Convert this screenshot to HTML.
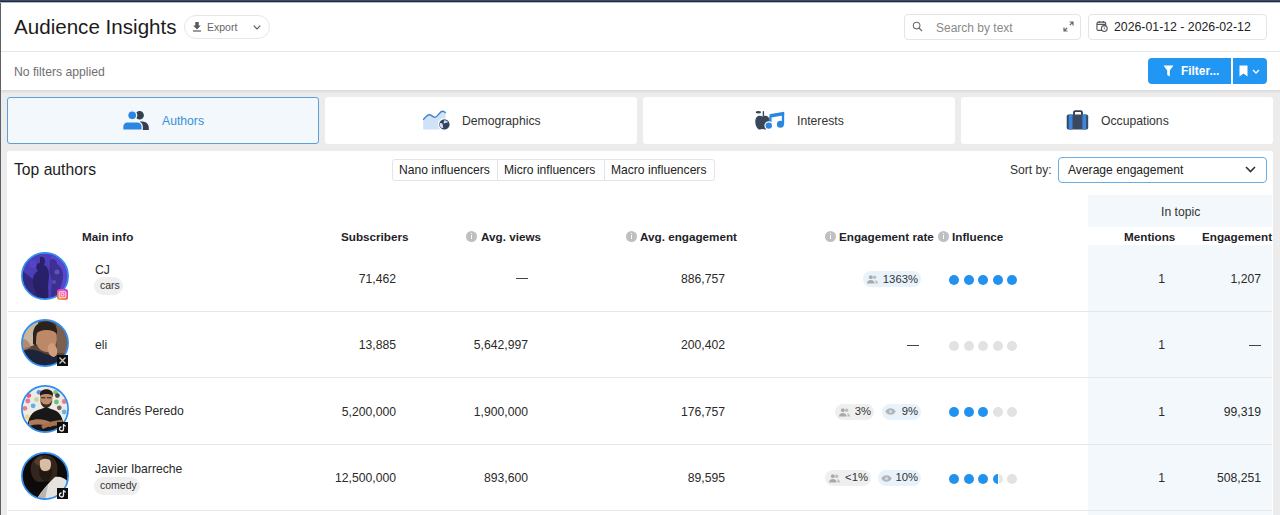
<!DOCTYPE html>
<html><head><meta charset="utf-8">
<style>
*{box-sizing:border-box;margin:0;padding:0}
html,body{-webkit-font-smoothing:antialiased;width:1280px;height:515px;overflow:hidden;background:#ececed;font-family:"Liberation Sans",sans-serif;color:#222}
.abs{position:absolute}
#topbar{left:0;top:0;width:1280px;height:3px;background:linear-gradient(#3b4a66 0,#3b4a66 1px,#1e2a41 1px,#1e2a41 2px,#b4bac4 2px)}
#leftbar{left:0;top:3px;width:1px;height:512px;background:#5c6068}
#header{left:1px;top:2px;width:1279px;height:88px;background:#fff}
#hline{left:1px;top:51px;width:1279px;height:1px;background:#e6e7ea}
.t{position:absolute;white-space:nowrap;line-height:1}
.btn-export{left:184px;top:15px;width:86px;height:24px;border:1px solid #e6e6e8;border-radius:12px;background:#fff}
.inp{border:1px solid #e3e4e7;border-radius:4px;background:#fff}
.tab{top:97px;height:47px;background:#fff;border-radius:3px}
.tab.active{background:#f3f8fd;border:1px solid #5c9fdd}
.card{left:7px;top:151px;width:1266px;height:380px;background:#fff;border-radius:3px}
.seg{left:392px;top:159px;width:323px;height:22px;border:1px solid #e3e4e7;border-radius:3px;background:#fff}
.seg div{position:absolute;top:0;height:20px;border-left:1px solid #e3e4e7}
.select{left:1058px;top:157px;width:209px;height:26px;border:1px solid #6aaee6;border-radius:4px;background:#fff}
.intopic{left:1088px;top:195px;width:184px;height:32px;background:#f3f8fc}
.intopic2{left:1088px;top:245px;width:184px;height:270px;background:#f3f8fc}
.hdr{font-weight:bold;font-size:11.7px;color:#1f2329}
.info{position:absolute;width:11px;height:11px;border-radius:50%;background:#bfbfc1}
.info:after{content:"";position:absolute;left:5px;top:4.5px;width:1.3px;height:4px;background:#fff}
.info:before{content:"";position:absolute;left:5px;top:2px;width:1.3px;height:1.3px;background:#fff}
.rowline{position:absolute;left:8px;width:1264px;height:1px;background:#e5e6e9}
.num{font-size:12.2px;color:#2a2a2a}
.name{font-size:12.2px;color:#2a2a2a}
.chip{position:absolute;height:18px;border-radius:9px;background:#efefef;font-size:10.5px;color:#333;line-height:16.5px;padding:0 6px}
.av{position:absolute;width:48px;height:48px;line-height:0}
.dot{position:absolute;width:10px;height:10px;border-radius:50%;background:#2193ef}
.dot.g{background:#e2e2e3}
.pct{position:absolute;height:16px;border-radius:8px;font-size:11.3px;color:#333;line-height:16px}
.pct.b{background:#e8f2fb}
.pct.gr{background:#efefef}
.pct .ic{position:absolute;top:3px;line-height:0}
.pct .pt{position:absolute;top:2px;line-height:1}
.dot.half{background:linear-gradient(90deg,#2193ef 48%,#fff 48%,#fff 56%,#e6e6e7 56%)}
.badge{position:absolute;width:11px;height:11px;line-height:0}
.badge.ig{border-radius:2.5px;background:linear-gradient(20deg,#f8c84a 0%,#f5703a 25%,#ec4aa0 60%,#c43ad8 100%)}
.badge.bx{background:#0e0e0e}
</style></head><body>
<div id="header" class="abs"></div>
<div id="topbar" class="abs"></div>
<div id="leftbar" class="abs"></div>
<div id="hline" class="abs"></div>
<div class="abs" style="left:1px;top:90px;width:1279px;height:4px;background:linear-gradient(#dadadc,#ececed)"></div>

<!-- Title -->
<div class="t" style="left:14px;top:17px;font-size:20.6px;color:#1c1c1c">Audience Insights</div>
<div class="abs btn-export"></div>
<svg class="abs" style="left:193px;top:21.5px" width="8" height="10" viewBox="0 0 8 10"><path d="M2.3 0h3.4v3.6h2.1L4 7.4 0.2 3.6h2.1z" fill="#5a5a5a"/><rect x="0" y="8.4" width="8" height="1.2" fill="#5a5a5a"/></svg>
<div class="t" style="left:207px;top:22px;font-size:10.5px;color:#666">Export</div>
<svg class="abs" style="left:252.5px;top:24.5px" width="8" height="5" viewBox="0 0 8 5"><path d="M0.7 0.7l3.3 3.3 3.3-3.3" stroke="#5a5a5a" stroke-width="1.1" fill="none"/></svg>

<!-- Search -->
<div class="abs inp" style="left:904px;top:14px;width:177px;height:26px"></div>
<svg class="abs" style="left:912px;top:21px" width="11" height="11" viewBox="0 0 11 11"><circle cx="4.6" cy="4.6" r="3.3" stroke="#707070" stroke-width="1.1" fill="none"/><path d="M7 7l3 3" stroke="#707070" stroke-width="1.3"/></svg>
<div class="t" style="left:936px;top:21.5px;font-size:12px;color:#8a8a8a">Search by text</div>
<svg class="abs" style="left:1063px;top:21px" width="11" height="11" viewBox="0 0 11 11"><path d="M6.5 1h3.5v3.5M10 1L6.8 4.2M4.5 10H1V6.5M1 10l3.2-3.2" stroke="#666" stroke-width="1.2" fill="none"/></svg>

<!-- Date -->
<div class="abs inp" style="left:1088px;top:14px;width:179px;height:26px"></div>
<svg class="abs" style="left:1096px;top:20px" width="12" height="13" viewBox="0 0 13 13.5"><rect x="1" y="2" width="9.5" height="9" rx="1.5" stroke="#555" stroke-width="1.2" fill="none"/><path d="M1 4.5h9.5M3.5 0.8v2M8 0.8v2" stroke="#555" stroke-width="1.2"/><circle cx="9" cy="9" r="3.2" fill="#fff" stroke="#555" stroke-width="1.1"/><path d="M9 7.5v1.6l1 .7" stroke="#555" stroke-width="0.9" fill="none"/></svg>
<div class="t" style="left:1114px;top:20.5px;font-size:12.3px;color:#222">2026-01-12 - 2026-02-12</div>

<!-- filters row -->
<div class="t" style="left:14px;top:65.5px;font-size:12.2px;color:#707070">No filters applied</div>
<div class="abs" style="left:1148px;top:58px;width:83px;height:26px;background:#2196f3;border-radius:4px 0 0 4px"></div>
<div class="abs" style="left:1233px;top:58px;width:34px;height:26px;background:#2196f3;border-radius:0 4px 4px 0"></div>
<svg class="abs" style="left:1163px;top:65px" width="11" height="12" viewBox="0 0 11 12"><path d="M0.5 0.5h10L6.8 5.5V11.5L4.2 10V5.5z" fill="#fff"/></svg>
<div class="t" style="left:1181px;top:65.5px;font-size:11.9px;font-weight:bold;color:#fff">Filter...</div>
<svg class="abs" style="left:1239px;top:65px" width="10" height="12" viewBox="0 0 10 12"><path d="M0.5 0.5h8v11L4.5 8.5 0.5 11.5z" fill="#fff"/></svg>
<svg class="abs" style="left:1252px;top:69px" width="8" height="5" viewBox="0 0 8 5"><path d="M1 1l3 3 3-3" stroke="#fff" stroke-width="1.3" fill="none"/></svg>

<!-- tabs -->
<div class="abs tab active" style="left:7px;width:312px"></div>
<div class="abs tab" style="left:325px;width:312px"></div>
<div class="abs tab" style="left:643px;width:312px"></div>
<div class="abs tab" style="left:961px;width:312px"></div>

<svg class="abs" style="left:120px;top:108px" width="32" height="26" viewBox="0 0 32 26"><path d="M19.6 3a4.3 4.3 0 1 1 0 8.6a4.3 4.3 0 1 1 0-8.6z" fill="#343f50"/><circle cx="12.2" cy="7.3" r="4.5" fill="#2a86e0" stroke="#f3f8fd" stroke-width="1.3"/><path d="M20 13.5h2.5c3.5 0 6.3 2.8 6.3 6.3v2.3H20z" fill="#343f50"/><path d="M7 13.9h10.5c2.6 0 4.7 2.2 4.7 4.8v3.4H2.7v-3.4c0-2.6 1.9-4.8 4.3-4.8z" fill="#2a86e0" stroke="#f3f8fd" stroke-width="1.3"/></svg>
<div class="t" style="left:162px;top:115px;font-size:12.2px;color:#3a8fd9">Authors</div>

<svg class="abs" style="left:420px;top:108px" width="32" height="26" viewBox="0 0 32 26"><path d="M3.2 11.7C5.5 9 7.5 6.8 9.3 6.8C11.5 6.8 13 9.4 15.1 9.4C17.5 9.4 19.8 3.3 22.4 3.3C23.8 3.3 25 4.2 25.6 5V21.6H3.2Z" fill="#cfe2f8"/><path d="M3.2 11.7C5.5 9 7.5 6.8 9.3 6.8C11.5 6.8 13 9.4 15.1 9.4C17.5 9.4 19.8 3.3 22.4 3.3C23.8 3.3 25 4.2 25.6 5" fill="none" stroke="#3f82d0" stroke-width="1.4"/><circle cx="24.4" cy="16.4" r="5.8" fill="#33435c" stroke="#fff" stroke-width="1.2"/><path d="M19.8 15.2c1.2-.4 2.6.2 3 1.4c.4 1.2-.2 2.4.6 3.5c-1.6.1-3.2-.9-3.6-2.4z" fill="#cfe2f8"/><path d="M24.6 12c1.2.9 3 .8 3.6 2.2c-1 .4-2.3.1-3 .9c-.6.6-1.4.2-1.6-.6z" fill="#cfe2f8"/></svg>
<div class="t" style="left:462px;top:115px;font-size:12.2px;color:#333">Demographics</div>

<svg class="abs" style="left:750px;top:104px" width="40" height="30" viewBox="0 0 40 30"><ellipse cx="8.4" cy="8.3" rx="2.7" ry="1.3" fill="#3a4659"/><path d="M13.4 7.2V12" stroke="#3a4659" stroke-width="1.4"/><path d="M9.5 11.8c-2.5 0-4.2 2.3-4.2 6c0 4.2 2.3 7.8 4.6 7.8c1 0 1.6-.5 2.6-.5s1.6.5 2.6.5c2.3 0 4.2-3.6 4.6-7.8c.3-3.8-1.8-6-4.2-6c-1.2 0-2 .5-3 .5s-1.8-.5-3-.5z" fill="#3a4659"/><path d="M20.4 21.5V11.5M33 20.2V9" stroke="#2a86e0" stroke-width="2.3"/><path d="M19.3 10.3L34.2 7.8V11.3L21.5 13.4Z" fill="#2a86e0"/><circle cx="18.8" cy="21.6" r="3.8" fill="#2a86e0" stroke="#fff" stroke-width="1.2"/><circle cx="30.4" cy="20.3" r="3.5" fill="#2a86e0"/></svg>
<div class="t" style="left:797px;top:115px;font-size:12.2px;color:#333">Interests</div>

<svg class="abs" style="left:1060px;top:104px" width="35" height="30" viewBox="0 0 35 30"><path d="M14 11V8.5c0-.8.6-1.4 1.4-1.4h5.2c.8 0 1.4.6 1.4 1.4V11" stroke="#343f52" stroke-width="1.9" fill="none"/><rect x="6.7" y="10.5" width="21.5" height="15.1" rx="1.8" fill="#3b4860"/><rect x="8.7" y="10.5" width="3.8" height="15.1" fill="#3a86dc"/><rect x="22.4" y="10.5" width="3.8" height="15.1" fill="#3a86dc"/></svg>
<div class="t" style="left:1101px;top:115px;font-size:12.2px;color:#333">Occupations</div>

<!-- card -->
<div class="abs card"></div>
<div class="t" style="left:14px;top:162px;font-size:15.7px;color:#1c1c1c">Top authors</div>
<div class="abs seg"><div style="left:104px"></div><div style="left:211px"></div></div>
<div class="t" style="left:399px;top:164px;font-size:12.1px;color:#222">Nano influencers</div>
<div class="t" style="left:504px;top:164px;font-size:12.1px;color:#222">Micro influencers</div>
<div class="t" style="left:611px;top:164px;font-size:12.1px;color:#222">Macro influencers</div>

<div class="t" style="left:1010px;top:164px;font-size:12.1px;color:#333">Sort by:</div>
<div class="abs select"></div>
<div class="t" style="left:1068px;top:164px;font-size:12.1px;color:#222">Average engagement</div>
<svg class="abs" style="left:1245px;top:166px" width="11" height="7" viewBox="0 0 11 7"><path d="M1 1l4.5 4.5L10 1" stroke="#333" stroke-width="1.6" fill="none"/></svg>

<div class="abs intopic"></div>
<div class="abs intopic2"></div>
<div class="t" style="left:1161px;top:206px;font-size:12.2px;color:#333">In topic</div>

<div class="t hdr" style="left:82px;top:230.5px">Main info</div>
<div class="t hdr" style="left:341px;top:230.5px">Subscribers</div>
<div class="info" style="left:466px;top:230.5px"></div>
<div class="t hdr" style="left:481px;top:230.5px">Avg. views</div>
<div class="info" style="left:626px;top:230.5px"></div>
<div class="t hdr" style="left:640px;top:230.5px">Avg. engagement</div>
<div class="info" style="left:825px;top:230.5px"></div>
<div class="t hdr" style="left:839px;top:230.5px">Engagement rate</div>
<div class="info" style="left:938px;top:230.5px"></div>
<div class="t hdr" style="left:952px;top:230.5px">Influence</div>
<div class="t hdr" style="left:1124px;top:230.5px">Mentions</div>
<div class="t hdr" style="left:1202px;top:230.5px">Engagement</div>

<div class="rowline" style="top:311px"></div>
<div class="rowline" style="top:377px"></div>
<div class="rowline" style="top:444px"></div>
<div class="rowline" style="top:510px"></div>

<div id="rows">
<div class="av" style="left:20.5px;top:252px"><svg width="48" height="48" viewBox="0 0 48 48"><defs><clipPath id="c1"><circle cx="24" cy="24" r="23"/></clipPath></defs><g clip-path="url(#c1)"><rect width="48" height="48" fill="#4d3db8"/><path d="M0 18 L0 48 H26 C22 40 16 30 8 24 Z" fill="#33287e"/><path d="M30 4 C38 4 46 12 47 22 L48 48 H30 C32 38 34 28 31 18 Z" fill="#5846cc"/><path d="M19 5 c3 -1 5 1 5 4 c0 2 -1 3 -1 4 c4 2 5 6 5 11 l-1 10 c0 4 1 10 0 14 h-10 c-1 -6 -4 -10 -5 -16 c-1 -6 1 -11 5 -13 c-1 -1 -2 -3 -2 -5 c0 -2 1 -3 4 -3z" fill="#261d62" opacity="0.9"/><path d="M31 7 c3 0 5 2 5 5 c3 2 6 6 6 11 c0 6 -2 10 -3 14 l-2 10 h-7 c0 -8 2 -16 0 -22 c-2 -4 -2 -8 -1 -12 c0 -3 0 -6 2 -6z" fill="#3a2e8a" opacity="0.9"/><circle cx="36" cy="20" r="2.5" fill="#7a66e6" opacity="0.6"/><circle cx="33" cy="30" r="2" fill="#7a68e0" opacity="0.5"/><circle cx="12" cy="12" r="4" fill="#5c4ad0" opacity="0.6"/></g><circle cx="24" cy="24" r="23.1" fill="none" stroke="#2f8ef0" stroke-width="1.7"/></svg></div>
<div class="badge ig" style="left:57px;top:289px"><svg width="11" height="11" viewBox="0 0 11 11"><rect x="2.2" y="2.2" width="6.6" height="6.6" rx="2" fill="none" stroke="#ffd6f2" stroke-width="1.1"/><circle cx="5.5" cy="5.5" r="1.6" fill="none" stroke="#ffd6f2" stroke-width="1.1"/></svg></div>
<div class="t name" style="left:95px;top:263.5px">CJ</div>
<div class="chip" style="left:94px;top:277px;width:29px">cars</div>
<div class="t num" style="right:884px;top:272.8px;">71,462</div>
<div class="abs" style="left:516px;top:277.5px;width:12px;height:1.3px;background:#444"></div>
<div class="t num" style="right:555px;top:272.8px;">886,757</div>
<div class="pct b" style="left:863px;top:271.2px;width:58px"><span class="ic" style="left:4px;top:4px"><svg width="11" height="9" viewBox="0 0 11 9"><circle cx="3.8" cy="2.2" r="1.9" fill="#a9a9ab"/><circle cx="7.6" cy="2.2" r="1.7" fill="#bdbdbf"/><path d="M0 8.5c0-2.2 1.5-3.5 3.8-3.5s3.8 1.3 3.8 3.5z" fill="#a9a9ab"/><path d="M8.3 5.2c1.6.2 2.7 1.4 2.7 3.3H8.6c0-1.3-.2-2.4-.3-3.3z" fill="#bdbdbf"/></svg></span><span class="pt" style="right:3px;top:3px">1363%</span></div>
<div class="dot" style="left:949.0px;top:274.5px"></div>
<div class="dot" style="left:963.5px;top:274.5px"></div>
<div class="dot" style="left:978.0px;top:274.5px"></div>
<div class="dot" style="left:992.5px;top:274.5px"></div>
<div class="dot" style="left:1007.0px;top:274.5px"></div>
<div class="t num" style="right:115px;top:272.8px;">1</div>
<div class="t num" style="right:19px;top:272.8px;">1,207</div>
<div class="av" style="left:20.5px;top:319px"><svg width="48" height="48" viewBox="0 0 48 48"><defs><clipPath id="c2"><circle cx="24" cy="24" r="23"/></clipPath></defs><g clip-path="url(#c2)"><rect width="48" height="48" fill="#5a4638"/><path d="M0 0 H17 V25 L0 30 Z" fill="#c9b69c"/><path d="M0 20 C4 19 8 22 10 28 L0 34Z" fill="#b08068" opacity="0.8"/><path d="M35 0 H48 V34 H36 Z" fill="#7a604e"/><path d="M12 18 C11 7 18 2 26 2.5 C33 3 37 8 36 15 L34 14 C30 10 21 10 16 15 L15 27 L12 25Z" fill="#2a221d"/><path d="M16 14 C20 10 31 10 35 14 C37 20 35 28 31 32 C27 34 20 33 17 28 C15 24 15 18 16 14Z" fill="#bd8868"/><path d="M0 32 C8 29 16 31 22 34 C28 36 34 38 40 36 C45 36 48 40 48 48 H0Z" fill="#1d2338"/><ellipse cx="31.5" cy="31" rx="4.6" ry="7" transform="rotate(-15 31.5 31)" fill="#cf9d7d"/></g><circle cx="24" cy="24" r="23.1" fill="none" stroke="#2f8ef0" stroke-width="1.7"/></svg></div>
<div class="badge bx" style="left:57px;top:355px"><svg width="11" height="11" viewBox="0 0 11 11"><path d="M2.5 2.5L8.5 8.5M8.5 2.5L2.5 8.5" stroke="#d0d0d0" stroke-width="1.3"/></svg></div>
<div class="t name" style="left:95px;top:338.8px">eli</div>
<div class="t num" style="right:884px;top:339.3px;">13,885</div>
<div class="t num" style="right:752px;top:339.3px;">5,642,997</div>
<div class="t num" style="right:555px;top:339.3px;">200,402</div>
<div class="abs" style="left:907px;top:344.5px;width:12px;height:1.3px;background:#444"></div>
<div class="dot g" style="left:949.0px;top:340.5px"></div>
<div class="dot g" style="left:963.5px;top:340.5px"></div>
<div class="dot g" style="left:978.0px;top:340.5px"></div>
<div class="dot g" style="left:992.5px;top:340.5px"></div>
<div class="dot g" style="left:1007.0px;top:340.5px"></div>
<div class="t num" style="right:115px;top:339.3px;">1</div>
<div class="abs" style="left:1249px;top:344.5px;width:12px;height:1.3px;background:#444"></div>
<div class="av" style="left:20.5px;top:385px"><svg width="48" height="48" viewBox="0 0 48 48"><defs><clipPath id="c3"><circle cx="24" cy="24" r="23"/></clipPath></defs><g clip-path="url(#c3)"><rect width="48" height="48" fill="#eeeae6"/><circle cx="7.8" cy="10.6" r="2.4" fill="#e04848" opacity="0.85"/><circle cx="18" cy="7.3" r="2.4" fill="#4a7ee0" opacity="0.85"/><circle cx="6.8" cy="16" r="2.4" fill="#e060a0" opacity="0.85"/><circle cx="15.5" cy="14.5" r="2.4" fill="#b8d890" opacity="0.85"/><circle cx="12.1" cy="20.8" r="2.4" fill="#40a8e8" opacity="0.85"/><circle cx="3.9" cy="23.3" r="2.4" fill="#e07070" opacity="0.85"/><circle cx="34.5" cy="7.3" r="2.4" fill="#70c070" opacity="0.85"/><circle cx="36.4" cy="10.6" r="2.4" fill="#303030" opacity="0.85"/><circle cx="35.4" cy="17" r="2.4" fill="#50b870" opacity="0.85"/><circle cx="43.2" cy="16.5" r="2.4" fill="#e07070" opacity="0.85"/><circle cx="43.2" cy="27" r="2.4" fill="#50a8e8" opacity="0.85"/><circle cx="38.3" cy="22.8" r="2.4" fill="#6a4a3a" opacity="0.85"/><circle cx="6.3" cy="32" r="2.4" fill="#f0d070" opacity="0.85"/><path d="M19 10 C18 3 31 2 32 9 L31.5 12 C28 10 22 10 19.5 12Z" fill="#241a14"/><path d="M19.5 10.5 C22 8.5 29 8.5 31 10.5 C32 15 31.5 19 29 21 C27 22.5 23.5 22.5 21.5 21 C19 19 18.5 15 19.5 10.5Z" fill="#c08c6c"/><path d="M19.5 15 C21 21 29.5 21 31 15 C30.8 19.5 29 22.5 25.2 23 C21.5 22.5 19.8 19.5 19.5 15Z" fill="#3a2a20"/><path d="M20 12.8 h4.5 M26 12.8 h4.5" stroke="#222" stroke-width="1"/><path d="M6 48 C6 32 11 26 20 24 L25 22 L30 24 C39 26 43 32 43 48Z" fill="#181818"/><path d="M8 36 C16 33 24 34 32 38 L30 42 C22 39 15 39 8 41Z" fill="#b07a5a"/><path d="M41 35 C34 35 27 37 20 41 L22 44 C28 41 35 40 42 40Z" fill="#a87050"/></g><circle cx="24" cy="24" r="23.1" fill="none" stroke="#2f8ef0" stroke-width="1.7"/></svg></div>
<div class="badge bx" style="left:57px;top:422px"><svg width="11" height="11" viewBox="0 0 11 11"><path d="M6.5 2.2v4.8a2 2 0 1 1-2-2" fill="none" stroke="#eee" stroke-width="1.3"/><path d="M6.5 2.2c.3 1.2 1.1 1.9 2.3 2" fill="none" stroke="#eee" stroke-width="1.2"/></svg></div>
<div class="t name" style="left:95px;top:405.3px">Candrés Peredo</div>
<div class="t num" style="right:884px;top:405.8px;">5,200,000</div>
<div class="t num" style="right:752px;top:405.8px;">1,900,000</div>
<div class="t num" style="right:555px;top:405.8px;">176,757</div>
<div class="pct gr" style="left:835px;top:403.7px;width:39px"><span class="ic" style="left:4px;top:4px"><svg width="11" height="9" viewBox="0 0 11 9"><circle cx="3.8" cy="2.2" r="1.9" fill="#a9a9ab"/><circle cx="7.6" cy="2.2" r="1.7" fill="#bdbdbf"/><path d="M0 8.5c0-2.2 1.5-3.5 3.8-3.5s3.8 1.3 3.8 3.5z" fill="#a9a9ab"/><path d="M8.3 5.2c1.6.2 2.7 1.4 2.7 3.3H8.6c0-1.3-.2-2.4-.3-3.3z" fill="#bdbdbf"/></svg></span><span class="pt" style="right:3px;top:2px">3%</span></div>
<div class="pct b" style="left:882px;top:403.7px;width:39px"><span class="ic" style="left:3px;top:4.5px"><svg width="11" height="7" viewBox="0 0 11 7"><path d="M0.3 3.5C1.6 1.2 3.4 0.2 5.5 0.2S9.4 1.2 10.7 3.5C9.4 5.8 7.6 6.8 5.5 6.8S1.6 5.8 0.3 3.5z" fill="#b4b4b6"/><circle cx="5.5" cy="3.5" r="1.5" fill="#dcdde0"/></svg></span><span class="pt" style="right:3px;top:2px">9%</span></div>
<div class="dot" style="left:949.0px;top:407.0px"></div>
<div class="dot" style="left:963.5px;top:407.0px"></div>
<div class="dot" style="left:978.0px;top:407.0px"></div>
<div class="dot g" style="left:992.5px;top:407.0px"></div>
<div class="dot g" style="left:1007.0px;top:407.0px"></div>
<div class="t num" style="right:115px;top:405.8px;">1</div>
<div class="t num" style="right:19px;top:405.8px;">99,319</div>
<div class="av" style="left:20.5px;top:452px"><svg width="48" height="48" viewBox="0 0 48 48"><defs><clipPath id="c4"><circle cx="24" cy="24" r="23"/></clipPath></defs><g clip-path="url(#c4)"><rect width="48" height="48" fill="#0d0b0a"/><path d="M10 20 C8 8 17 2 25 3 C34 4 38 11 36 22 C35 28 32 30 30 29 L18 30 C13 29 11 25 10 20Z" fill="#33261d"/><path d="M13 10 C15 6 19 4 22 4 L17 14Z" fill="#5a4434" opacity="0.8"/><path d="M19 8.5 C21.5 6 28 6 29.5 9 C30.5 12.5 30 16 28 18 C25.5 19.5 21.5 19.5 20 17 C18.5 14.5 18.5 11 19 8.5Z" fill="#d8bca4"/><path d="M18 16 C20 21 28.5 21 31 16 C32 24 29 29 25 29 C20.5 29 17.5 24 18 16Z" fill="#221812"/><path d="M15 48 C20 40 26 32 34 25 C39 24 44 26 47 30 L48 48Z" fill="#e6e3df"/><path d="M15 48 C19 42 23 37 27 33 L24 48Z" fill="#b8b4b0"/></g><circle cx="24" cy="24" r="23.1" fill="none" stroke="#2f8ef0" stroke-width="1.7"/></svg></div>
<div class="badge bx" style="left:57px;top:488px"><svg width="11" height="11" viewBox="0 0 11 11"><path d="M6.5 2.2v4.8a2 2 0 1 1-2-2" fill="none" stroke="#eee" stroke-width="1.3"/><path d="M6.5 2.2c.3 1.2 1.1 1.9 2.3 2" fill="none" stroke="#eee" stroke-width="1.2"/></svg></div>
<div class="t name" style="left:95px;top:462.5px">Javier Ibarreche</div>
<div class="chip" style="left:94px;top:476.5px;width:46px">comedy</div>
<div class="t num" style="right:884px;top:471.8px;">12,500,000</div>
<div class="t num" style="right:752px;top:471.8px;">893,600</div>
<div class="t num" style="right:555px;top:471.8px;">89,595</div>
<div class="pct gr" style="left:825px;top:470.2px;width:46px"><span class="ic" style="left:4px;top:4px"><svg width="11" height="9" viewBox="0 0 11 9"><circle cx="3.8" cy="2.2" r="1.9" fill="#a9a9ab"/><circle cx="7.6" cy="2.2" r="1.7" fill="#bdbdbf"/><path d="M0 8.5c0-2.2 1.5-3.5 3.8-3.5s3.8 1.3 3.8 3.5z" fill="#a9a9ab"/><path d="M8.3 5.2c1.6.2 2.7 1.4 2.7 3.3H8.6c0-1.3-.2-2.4-.3-3.3z" fill="#bdbdbf"/></svg></span><span class="pt" style="right:3px;top:2px"><1%</span></div>
<div class="pct b" style="left:878px;top:470.2px;width:43px"><span class="ic" style="left:3px;top:4.5px"><svg width="11" height="7" viewBox="0 0 11 7"><path d="M0.3 3.5C1.6 1.2 3.4 0.2 5.5 0.2S9.4 1.2 10.7 3.5C9.4 5.8 7.6 6.8 5.5 6.8S1.6 5.8 0.3 3.5z" fill="#b4b4b6"/><circle cx="5.5" cy="3.5" r="1.5" fill="#dcdde0"/></svg></span><span class="pt" style="right:3px;top:2px">10%</span></div>
<div class="dot" style="left:949.0px;top:473.5px"></div>
<div class="dot" style="left:963.5px;top:473.5px"></div>
<div class="dot" style="left:978.0px;top:473.5px"></div>
<div class="dot half" style="left:992.5px;top:473.5px"></div>
<div class="dot g" style="left:1007.0px;top:473.5px"></div>
<div class="t num" style="right:115px;top:471.8px;">1</div>
<div class="t num" style="right:19px;top:471.8px;">508,251</div>
</div><!--/rows-->
</body></html>
